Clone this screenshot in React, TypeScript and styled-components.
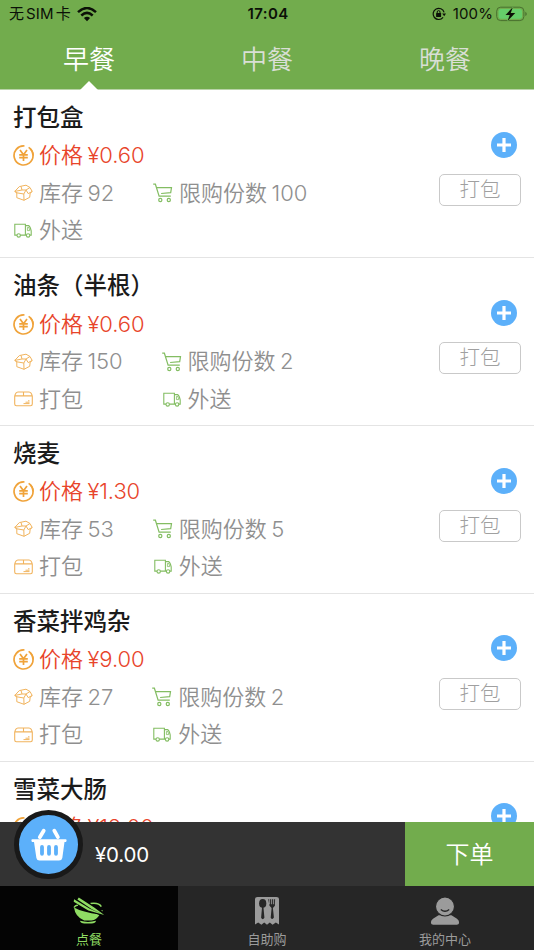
import React from 'react';
import styled, { createGlobalStyle } from 'styled-components';

const GlobalStyle = createGlobalStyle`
  * { box-sizing: border-box; }
  body {
    margin: 0;
    font-family: Inter, "Noto Sans CJK SC", sans-serif;
    background: #fff;
  }
  svg { display: block; flex: none; }
`;

const Screen = styled.div`
  width: 534px;
  height: 950px;
  overflow: hidden;
  display: flex;
  flex-direction: column;
`;

const Header = styled.header`
  flex: none;
  height: 90px;
  background: #72ac4d;
  border-bottom: 1px solid #b9d3a8;
`;

const StatusBar = styled.div`
  height: 28px;
  padding: 0 7px 0 9px;
  display: grid;
  grid-template-columns: 1fr auto 1fr;
  align-items: center;
  font-size: 15px;
  line-height: 28px;
  color: #0b1007;
`;

const Carrier = styled.div`
  display: flex;
  align-items: center;
  gap: 6px;
`;

const CarrierName = styled.span`
  display: flex;
  gap: 2px;
  letter-spacing: 0.1px;
`;

const Clock = styled.div`
  font-weight: 600;
  letter-spacing: 0.4px;
`;

const Power = styled.div`
  display: flex;
  align-items: center;
  justify-content: flex-end;
  gap: 3px;
  letter-spacing: 0.1px;
`;

const LockSlot = styled.span`
  margin-right: 4px;
`;

const MealTabs = styled.nav`
  display: grid;
  grid-template-columns: repeat(3, 1fr);
  height: 62px;
`;

const MealTab = styled.div<{ $active?: boolean }>`
  position: relative;
  display: flex;
  justify-content: center;
  padding-top: 13px;
  font-size: 26px;
  line-height: 38px;
  font-weight: 350;
  color: ${p => (p.$active ? '#fff' : '#d9dfd5')};
`;

const Pointer = styled.span`
  position: absolute;
  bottom: 0;
  left: 50%;
  margin-left: -9px;
  border: solid transparent;
  border-width: 0 9px 9px;
  border-bottom-color: #fff;
`;

const List = styled.main`
  flex: 1;
  min-height: 0;
  overflow: hidden;
`;

const Dish = styled.section`
  height: 167.75px;
  padding: 9px 13px 0;
  display: flex;
  justify-content: space-between;
  border-bottom: 1px solid #e4e4e4;

  &:first-child {
    height: 168.25px;
  }
`;

const DishName = styled.h2`
  margin: 0;
  height: 38px;
  line-height: 37px;
  font-size: 23.5px;
  font-weight: 500;
  color: #1b1b1b;
  white-space: nowrap;
`;

const Facts = styled.div`
  display: grid;
  grid-template-columns: auto auto;
  grid-auto-rows: 37.5px;
  justify-content: start;
  column-gap: 39px;
`;

const Fact = styled.div<{ $price?: boolean }>`
  display: flex;
  align-items: center;
  gap: 6px;
  font-size: 22px;
  line-height: 39px;
  font-weight: 350;
  color: ${p => (p.$price ? '#e8442a' : '#8f8f8f')};
  white-space: nowrap;
  ${p => p.$price && 'grid-column: 1 / -1;'}
`;

const FactIcon = styled.span`
  width: 20px;
  display: flex;
  justify-content: center;
`;

const Amount = styled.span`
  margin-left: 4.5px;
  letter-spacing: -0.1px;
`;

const Actions = styled.div`
  display: flex;
  flex-direction: column;
  align-items: flex-end;
  padding-top: 32.5px;
`;

const AddButton = styled.button`
  width: 26px;
  height: 26px;
  margin: 0 4px 16.5px 0;
  padding: 0;
  border: 0;
  border-radius: 50%;
  background: #5cb0fa;
`;

const PackButton = styled.button`
  width: 82px;
  height: 32px;
  padding: 0;
  border: 1px solid #c9c9c9;
  border-radius: 5px;
  background: #fff;
  font: 300 20.5px/30px Inter, "Noto Sans CJK SC", sans-serif;
  color: #a0a0a0;
`;

const CartBar = styled.div`
  position: relative;
  flex: none;
  height: 64px;
  display: flex;
  background: #333;
  color: #fff;
`;

const Total = styled.div`
  flex: 1;
  padding-left: 95px;
  font-size: 20.5px;
  letter-spacing: -0.2px;
  line-height: 65px;
`;

const Basket = styled.div`
  position: absolute;
  left: 14px;
  top: -12px;
  width: 69px;
  height: 69px;
  border: 5px solid #191919;
  border-radius: 50%;
  background: #5cb0fa;
  display: flex;
  align-items: center;
  justify-content: center;
`;

const OrderButton = styled.button`
  width: 129px;
  padding: 0;
  border: 0;
  background: #72ac4d;
  color: #fff;
  font: 350 24px/66px Inter, "Noto Sans CJK SC", sans-serif;
`;

const BottomNav = styled.nav`
  flex: none;
  height: 64px;
  display: grid;
  grid-template-columns: repeat(3, 1fr);
  background: #262626;
`;

const NavItem = styled.div<{ $active?: boolean }>`
  display: flex;
  flex-direction: column;
  align-items: center;
  padding-top: 11px;
  font-size: 13px;
  line-height: 18px;
  color: ${p => (p.$active ? '#8fdc63' : '#9b9b9b')};
  background: ${p => (p.$active ? '#040404' : 'transparent')};
`;

const NavIcon = styled.span`
  height: 33px;
`;

const WifiIcon = () => (
  <svg width="20" height="15" viewBox="0 0 20 15" fill="none" stroke="#0b1007" strokeWidth="2.5">
    <path d="M1 5.1Q10-3 19 5.1" />
    <path d="M4.3 8.5Q10 3.3 15.7 8.5" />
    <path d="M10 14.2 6.9 11.1Q10 8.5 13.1 11.1Z" fill="#0b1007" stroke="none" />
  </svg>
);

const RotationLockIcon = () => (
  <svg width="14" height="14" viewBox="0 0 14 14" fill="none" stroke="#0b1007" strokeWidth="1.2">
    <path d="M11.1 10.4A5.6 5.6 0 1 1 12.1 5.4" />
    <path d="M10.2 6.4h3.8l-1.8 2.8Z" fill="#0b1007" stroke="none" />
    <rect x="4.1" y="6.1" width="5" height="3.9" rx=".5" fill="#0b1007" stroke="none" />
    <path d="M5.2 6.3V5a1.4 1.4 0 0 1 2.8 0v1.3" strokeWidth="1" />
  </svg>
);

const BatteryIcon = () => (
  <svg width="31" height="16" viewBox="0 0 31 16">
    <rect x=".7" y="1.2" width="27.2" height="13.4" rx="4" fill="none" stroke="#49702f" strokeWidth="1" />
    <rect x="2.6" y="3" width="23.4" height="9.8" rx="2.3" fill="#65ce69" />
    <path d="M29.3 5.7v4.4q1.5-.7 1.5-2.2t-1.5-2.2Z" fill="#49702f" />
    <path d="m16.8 1.2-7.2 7.7h4.2L11.5 15l7.7-8h-4.5Z" fill="#0b1007" stroke="#72bc59" strokeWidth="1" paintOrder="stroke" />
  </svg>
);

const CoinIcon = () => (
  <svg width="21" height="21" viewBox="0 0 21 21" fill="none" stroke="#f0a33a" strokeWidth="1.7">
    <path d="M15.6 2.4A9.5 9.5 0 1 1 11.5 1" />
    <path d="M17 3.5A9.5 9.5 0 0 1 20 10.5" />
    <path d="m7 5.1 3.5 4.7L14 5.1M6.2 9.8h8.6M6.2 12.7h8.6M10.5 9.8v6.3" />
  </svg>
);

const StockIcon = () => (
  <svg width="19" height="18" viewBox="0 0 19 18" fill="none" stroke="#f1b45e" strokeWidth="1" strokeLinejoin="round">
    <path d="M.8 7.4 5.3 2.6 12 1.2l4 2.3 2.2 4-2 1.6-.5 4.2-5.7 3-7.2-2.6V8.8Z" />
    <path d="M.8 7.4 2.8 8.8l7 1.2L12 6l4-2.5M9.8 10l.2 6.3M12 6l2.2 3.6 4-2.1M.8 7.4 8 6l4 0M8 6l-1-3.6" />
  </svg>
);

const PackIcon = () => (
  <svg width="19" height="16" viewBox="0 0 19 16" fill="none" stroke="#f1b45e" strokeWidth="1.1" strokeLinejoin="round">
    <path d="M.7 5.2Q1.5 1.2 4 1h11q2.5.2 3.3 4.2v7.9q0 1.7-1.7 1.7H2.4Q.7 14.8.7 13.1ZM.7 4.9h17.6M9.5 1v3.9" />
    <path d="M9.5 12.6h6M11.5 11.2h4M14 9.8h1.5" strokeWidth="1" />
  </svg>
);

const CartIcon = () => (
  <svg width="20" height="20" viewBox="0 0 20 20" fill="none" stroke="#83bd62" strokeWidth="1.2">
    <path d="M.2 1.2h2.2l3.7 12h11.7M3.5 4.6h15l-.8 5.1L8.1 10.5" />
    <circle cx="7.3" cy="17" r="1.6" />
    <circle cx="15.8" cy="17" r="1.6" />
  </svg>
);

const TruckIcon = () => (
  <svg width="18" height="15" viewBox="0 0 18 15" fill="none" stroke="#83bd62" strokeWidth="1.1">
    <path d="M3 12.1H.8V1.2h10.6v10.9H6.3M11.4 2.6h3.1q1.9 1.1 2.7 5.3v4.2h-1.3M11.5 12.1h1" />
    <path d="M13.4 4.5v3.1h2.3l-.8-3.1Z" strokeWidth=".8" />
    <circle cx="4.7" cy="12.4" r="1.7" />
    <circle cx="14.1" cy="12.4" r="1.7" />
  </svg>
);

const PlusIcon = () => (
  <svg width="26" height="26" viewBox="0 0 26 26" stroke="#fff" strokeWidth="3.2">
    <path d="M13 6v14M6 13h14" />
  </svg>
);

const BasketIcon = () => (
  <svg width="36" height="34" viewBox="0 0 36 34">
    <path d="M12.7 2.7 8.8 9.2M23.3 2.7l3.6 6.5" stroke="#fff" strokeWidth="3.8" strokeLinecap="round" />
    <path d="M1.3 11.3h33.4q.9 0 .9 1.3t-.9 1.5h-1.2l-2.2 15.8Q30.8 32.5 28 32.5H8.5q-2.6 0-3.1-2.6L3 14.1H1.3q-.9-.2-.9-1.5T1.3 11.3Z" fill="#fff" />
    <path d="M11 19v6.8M18 19v6.8M25 19v6.8" stroke="#5cb0fa" strokeWidth="3.8" strokeLinecap="round" />
  </svg>
);

const BowlIcon = () => (
  <svg width="32" height="28" viewBox="0 0 32 28">
    <path d="M1 10.5Q9 15.2 26.8 17.5 23.6 22.9 18.5 23.6H11.2Q2.2 19.9 1 10.5Z" fill="#8fdc63" />
    <path d="M7 23.8q8 2.2 16 0-.5 2.7-4.5 2.7h-7Q7.5 26.5 7 23.8Z" fill="#8fdc63" />
    <path d="M1 10.5Q2 8.5 5 7.9M17.5 6.6q8.4-1.2 10.8 3.1M29 13.2q0 2.5-1 4" fill="none" stroke="#8fdc63" strokeWidth="1.5" />
    <path d="M5 1.4Q18 10 30.8 17.7M1.3 3.3Q16 11.6 30.8 17.7" fill="none" stroke="#040404" strokeWidth="4.3" />
    <path d="m5.8.4 15.4 10 10.4 7.8L18.5 12 4.4 2.5ZM1.1 2.2 16.8 11.8l14.5 6.3-16-4.7L.7 4.7Z" fill="#8fdc63" />
  </svg>
);

const MenuIcon = () => (
  <svg width="24" height="28" viewBox="0 0 24 28">
    <path d="M2.5 0h19Q24 0 24 2v25.5l-3.2-1.9-3.2 2.1-2.8-2.1-2.8 2.1-2.8-2.1-2.8 2.1-3.2-2.1L0 27.5V2Q0 0 2.5 0Z" fill="#9b9b9b" />
    <g fill="#262626">
      <ellipse cx="7.7" cy="6.4" rx="3.6" ry="4.3" />
      <path d="M7.1 9.5h1.3l1 11.3q-1.7 2.8-3.3 0ZM13.2 2.2h1v5h.9v-5h1.1v5h.9v-5h1.1v5h.9v-5h1l-.2 6.5-2 2.2 1 9.7q-1.6 2.9-3.2.1l.9-9.8-2.1-2.2Z" />
    </g>
  </svg>
);

const PersonIcon = () => (
  <svg width="30" height="29" viewBox="0 0 30 29">
    <path d="M8.5 18.2h13L27 21.8q2.5 1.7 2.1 4.1-.3 1.8-2.3 1.8H3.2Q1.2 27.7.9 25.9.5 23.5 3 21.8Z" fill="#9b9b9b" />
    <circle cx="15" cy="9.5" r="9.5" fill="#9b9b9b" stroke="#262626" strokeWidth="1.1" />
    <path d="M10.8 12.5Q15 16 19.2 12.5" fill="none" stroke="#262626" strokeWidth="1.3" />
  </svg>
);

type DishData = { name: string; price: string; stock?: string; limit?: string; pack?: boolean; delivery?: boolean };

const dishes: DishData[] = [
  { name: '打包盒', price: '0.60', stock: '92', limit: '100', delivery: true },
  { name: '油条（半根）', price: '0.60', stock: '150', limit: '2', pack: true, delivery: true },
  { name: '烧麦', price: '1.30', stock: '53', limit: '5', pack: true, delivery: true },
  { name: '香菜拌鸡杂', price: '9.00', stock: '27', limit: '2', pack: true, delivery: true },
  { name: '雪菜大肠', price: '12.00' },
];

const FactItem = ({ icon, label, value, price }: { icon: React.ReactNode; label: string; value?: string; price?: boolean }) => (
  <Fact $price={price}>
    <FactIcon>{icon}</FactIcon>
    <span>
      {label}
      {value && <Amount>{value}</Amount>}
    </span>
  </Fact>
);

const DishRow = ({ dish }: { dish: DishData }) => (
  <Dish>
    <div>
      <DishName>{dish.name}</DishName>
      <Facts>
        <FactItem price icon={<CoinIcon />} label="价格" value={`¥${dish.price}`} />
        {dish.stock && <FactItem icon={<StockIcon />} label="库存" value={dish.stock} />}
        {dish.limit && <FactItem icon={<CartIcon />} label="限购份数" value={dish.limit} />}
        {dish.pack && <FactItem icon={<PackIcon />} label="打包" />}
        {dish.delivery && <FactItem icon={<TruckIcon />} label="外送" />}
      </Facts>
    </div>
    <Actions>
      <AddButton><PlusIcon /></AddButton>
      {dish.stock && <PackButton>打包</PackButton>}
    </Actions>
  </Dish>
);

export default function App() {
  return (
    <>
      <GlobalStyle />
      <Screen>
        <Header>
          <StatusBar>
            <Carrier>
              <CarrierName><span>无</span><span>SIM</span><span>卡</span></CarrierName>
              <WifiIcon />
            </Carrier>
            <Clock>17:04</Clock>
            <Power>
              <LockSlot><RotationLockIcon /></LockSlot>
              <span>100%</span>
              <BatteryIcon />
            </Power>
          </StatusBar>
          <MealTabs>
            <MealTab $active>早餐<Pointer /></MealTab>
            <MealTab>中餐</MealTab>
            <MealTab>晚餐</MealTab>
          </MealTabs>
        </Header>
        <List>
          {dishes.map(dish => <DishRow key={dish.name} dish={dish} />)}
        </List>
        <CartBar>
          <Total>¥0.00</Total>
          <OrderButton>下单</OrderButton>
          <Basket><BasketIcon /></Basket>
        </CartBar>
        <BottomNav>
          <NavItem $active><NavIcon><BowlIcon /></NavIcon>点餐</NavItem>
          <NavItem><NavIcon><MenuIcon /></NavIcon>自助购</NavItem>
          <NavItem><NavIcon><PersonIcon /></NavIcon>我的中心</NavItem>
        </BottomNav>
      </Screen>
    </>
  );
}
